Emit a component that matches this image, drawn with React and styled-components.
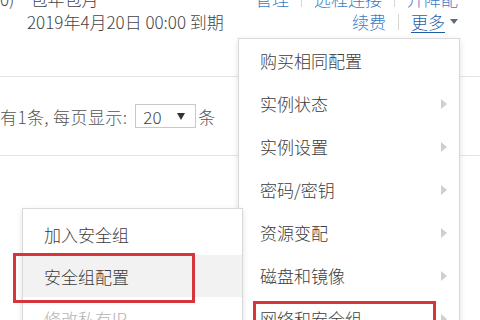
import React from "react";
import styled, { createGlobalStyle } from "styled-components";

const GlobalStyle = createGlobalStyle`
  html, body {
    margin: 0;
    padding: 0;
    background: #fff;
  }
  body {
    font-family: "Noto Sans CJK SC", "Liberation Sans", sans-serif;
    font-weight: 300;
    color: #333;
  }
`;

const Screen = styled.div`
  position: relative;
  width: 480px;
  height: 320px;
  overflow: hidden;
  background: #fff;
  font-size: 17px;
`;

const InfoBar = styled.div`
  margin-top: -13px;
  height: 89px;
  display: flex;
  justify-content: space-between;
  padding-right: 22px;
  border-bottom: 1px solid #e4e4e4;
`;

const Col = styled.div`
  display: flex;
  flex-direction: column;
  align-items: ${(p) => (p.$right ? "flex-end" : "flex-start")};
`;

const Line = styled.div`
  height: 23px;
  line-height: 23px;
  display: flex;
  align-items: center;
  white-space: nowrap;
  padding-left: ${(p) => p.$indent || 0}px;
  color: #444;
`;

const Gap = styled.span`
  display: inline-block;
  width: ${(p) => p.$w}px;
`;

const Link = styled.a`
  color: ${(p) => (p.$strong ? "#1f5ea6" : "#3b7bc6")};
  text-decoration: ${(p) => (p.$strong ? "underline" : "none")};
  text-underline-offset: 3px;
  cursor: pointer;
`;

const Sep = styled.span`
  display: inline-block;
  width: 1px;
  height: 16px;
  background: #d6d6d6;
  margin: 0 12px;
`;

const Caret = styled.span`
  display: inline-block;
  margin-left: 5px;
  width: 0;
  height: 0;
  border-left: 4px solid transparent;
  border-right: 4px solid transparent;
  border-top: 5px solid #5a6b80;
`;

const Pager = styled.div`
  height: 78px;
  display: flex;
  align-items: center;
  border-bottom: 1px solid #e4e4e4;
  color: #555;
  font-size: 17px;
  letter-spacing: 0.4px;
`;

const Select = styled.div`
  margin: 0 2px 0 8px;
  width: 61px;
  height: 24px;
  border: 1px solid #c8c8c8;
  display: flex;
  align-items: center;
  justify-content: space-between;
  padding: 0 10px 0 7px;
  box-sizing: border-box;
  color: #444;
  letter-spacing: 0;
`;

const SelArrow = styled.span`
  width: 0;
  height: 0;
  border-left: 4px solid transparent;
  border-right: 4px solid transparent;
  border-top: 7px solid #333;
`;

const Menu = styled.div`
  position: absolute;
  left: ${(p) => p.$left}px;
  top: ${(p) => p.$top}px;
  width: ${(p) => p.$width}px;
  padding: ${(p) => p.$pad || 0}px 0;
  background: #fff;
  border: 1px solid #d9d9d9;
  box-shadow: 0 2px 6px rgba(0, 0, 0, 0.12);
  box-sizing: border-box;
  z-index: ${(p) => p.$z || 1};
`;

const Item = styled.div`
  position: relative;
  height: ${(p) => p.$h}px;
  display: flex;
  align-items: center;
  justify-content: space-between;
  padding: 0 12px 0 21px;
  color: ${(p) => (p.$disabled ? "#b5b5b5" : "#3c3c3c")};
  background: ${(p) => (p.$active ? "#f2f2f2" : "transparent")};
  white-space: nowrap;
`;

const Arrow = styled.span`
  width: 0;
  height: 0;
  border-top: 5px solid transparent;
  border-bottom: 5px solid transparent;
  border-left: 6px solid #cfcfcf;
`;

const Mark = styled.div`
  position: absolute;
  left: ${(p) => p.$left}px;
  top: ${(p) => p.$top}px;
  width: ${(p) => p.$width}px;
  height: ${(p) => p.$height}px;
  border: 3px solid #d8353b;
  box-sizing: border-box;
  pointer-events: none;
`;

const mainItems = [
  { label: "购买相同配置" },
  { label: "实例状态", sub: true },
  { label: "实例设置", sub: true },
  { label: "密码/密钥", sub: true },
  { label: "资源变配", sub: true },
  { label: "磁盘和镜像", sub: true },
  { label: "网络和安全组", sub: true, mark: true },
];

const subItems = [
  { label: "加入安全组" },
  { label: "安全组配置", active: true, mark: true },
  { label: "修改私有IP", disabled: true },
];

export default function App() {
  return (
    <Screen>
      <GlobalStyle />
      <InfoBar>
        <Col>
          <Line>
            0)<Gap $w={16} />包年包月
          </Line>
          <Line $indent={27}>2019年4月20日 00:00 到期</Line>
        </Col>
        <Col $right>
          <Line>
            <Link>管理</Link>
            <Sep />
            <Link>远程连接</Link>
            <Sep />
            <Link>升降配</Link>
          </Line>
          <Line>
            <Link>续费</Link>
            <Sep />
            <Link $strong>更多</Link>
            <Caret />
          </Line>
        </Col>
      </InfoBar>
      <Pager>
        有1条, 每页显示:
        <Select>
          20
          <SelArrow />
        </Select>
        条
      </Pager>

      <Menu $left={238} $top={38} $width={222}>
        {mainItems.map((it) => (
          <Item key={it.label} $h={43}>
            {it.label}
            {it.sub && <Arrow />}
            {it.mark && <Mark $left={14} $top={4} $width={183} $height={50} />}
          </Item>
        ))}
      </Menu>

      <Menu $left={22} $top={208} $width={221} $pad={4} $z={2}>
        {subItems.map((it) => (
          <Item
            key={it.label}
            $h={42}
            $active={it.active}
            $disabled={it.disabled}
          >
            {it.label}
            {it.mark && <Mark $left={-10} $top={-2} $width={182} $height={50} />}
          </Item>
        ))}
      </Menu>
    </Screen>
  );
}
